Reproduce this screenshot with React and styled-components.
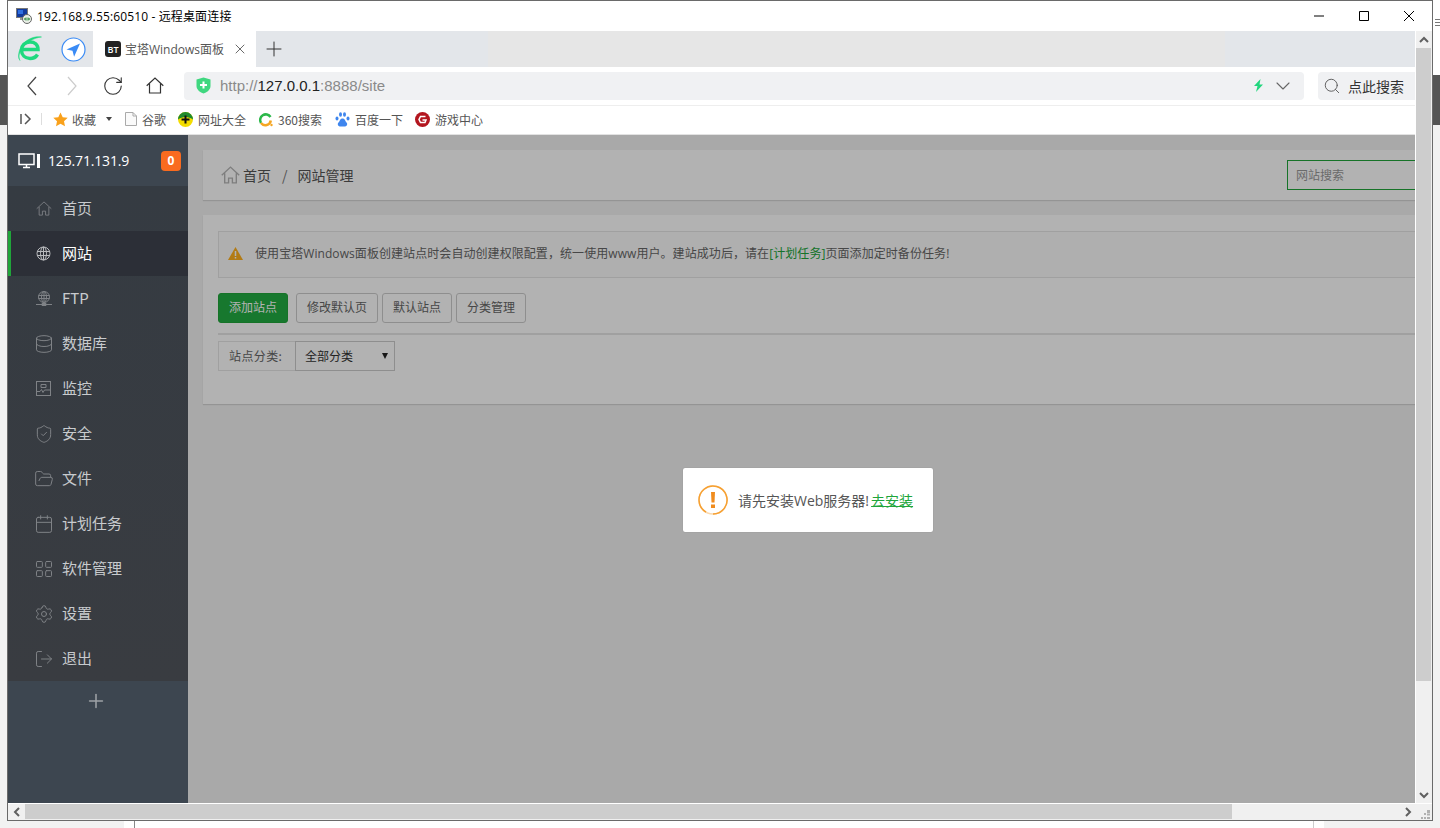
import React from 'react'
import styled, { createGlobalStyle } from 'styled-components'
import {
  Database,
  ShieldCheck,
  FolderOpen,
  Calendar,
  LayoutGrid,
  Settings,
  LogOut,
  Plus,
  RotateCw,
  ChevronDown,
  Search,
  X,
} from 'lucide-react'

const sans = `"Open Sans", "Noto Sans CJK SC", sans-serif`
const cjk = `"Noto Sans CJK SC", "Open Sans", sans-serif`

const GlobalStyle = createGlobalStyle`
  html, body {
    margin: 0;
    padding: 0;
    width: 1440px;
    height: 828px;
    overflow: hidden;
    background: #f2f2f2;
    font-family: ${cjk};
  }
  * { box-sizing: border-box; }
`

const Desktop = styled.div`
  display: grid;
  grid-template-columns: 7px 1426px 7px;
  grid-template-rows: 821px 7px;
  width: 1440px;
  height: 828px;
`

const SideStrip = styled.div`
  background: linear-gradient(#fff 0 75px, #555 75px 125px, #f2f2f2 125px);
`

const MenuDots = styled.svg`
  display: block;
  margin: 19px 0 0 2px;
`

const BottomStrip = styled.div`
  grid-column: 1 / 4;
  background: linear-gradient(
    90deg,
    #f2f2f2 0 124px,
    #fff 124px 134px,
    #888 134px 135px,
    #fff 135px 1313px,
    #ccc 1313px 1314px,
    #fff 1314px 1324px,
    #f2f2f2 1324px
  );
`

const Window = styled.div`
  display: flex;
  flex-direction: column;
  border: 1px solid #6a6a6a;
  background: #fff;
  min-width: 0;
`

const TitleBar = styled.div`
  display: flex;
  align-items: center;
  height: 30px;
  padding-left: 8px;
  flex: none;
`

const TitleText = styled.span`
  margin-left: 5px;
  font-family: ${sans};
  font-size: 12px;
  letter-spacing: 0.14px;
  color: #000;
  white-space: nowrap;
`

const WindowControls = styled.div`
  display: flex;
  align-items: center;
  gap: 33px;
  margin-left: auto;
  padding-right: 17px;
`

const Middle = styled.div`
  display: flex;
  flex: 1;
  min-height: 0;
`

const Browser = styled.div`
  display: flex;
  flex-direction: column;
  width: 1408px;
  flex: none;
  border-right: 1px solid #fff;
  min-height: 0;
`

const TabStrip = styled.div`
  display: flex;
  align-items: stretch;
  height: 36px;
  flex: none;
  background: linear-gradient(90deg, #e3e6ea 0 480px, #e6e6e6 480px 1217px, #e3e6ea 1217px);
`

const TabLogos = styled.div`
  display: flex;
  align-items: center;
  gap: 18px;
  width: 85px;
  padding-left: 9px;
`

const Tab = styled.div`
  display: flex;
  align-items: center;
  width: 163px;
  padding-left: 12px;
  background: #fff;
`

const Favicon = styled.span`
  display: flex;
  align-items: center;
  justify-content: center;
  width: 16px;
  height: 16px;
  border-radius: 3px;
  background: #222;
  color: #fff;
  font-family: ${sans};
  font-size: 9px;
  font-weight: 600;
`

const TabTitle = styled.span`
  margin-left: 4px;
  width: 107px;
  font-family: ${sans};
  font-size: 12px;
  color: #555;
  white-space: nowrap;
`

const NewTab = styled.div`
  display: flex;
  align-items: center;
  margin-left: 6px;
  color: #333;
`

const NavBar = styled.div`
  display: flex;
  align-items: center;
  height: 38px;
  flex: none;
  padding: 0 0 1px 15px;
`

const NavButton = styled.span`
  display: flex;
  justify-content: center;
  width: 18px;
  margin-right: ${(p) => p.$gap}px;
  color: ${(p) => p.$color || '#444'};
  svg {
    flex: none;
  }
`

const AddressBar = styled.div`
  display: flex;
  align-items: center;
  width: 1120px;
  height: 28px;
  padding: 0 9px 0 12px;
  border-radius: 4px;
  background: #f0f1f3;
`

const UrlText = styled.span`
  margin-left: 9px;
  font-family: "Liberation Sans", sans-serif;
  font-size: 15px;
  color: #8a8a8a;
`

const UrlHost = styled.span`
  color: #222;
`

const AddressTail = styled.div`
  display: flex;
  align-items: center;
  gap: 7px;
  margin-left: auto;
  color: #666;
`

const SearchBox = styled.div`
  display: flex;
  align-items: center;
  gap: 7px;
  flex: 1;
  height: 28px;
  margin-left: 14px;
  padding-left: 5px;
  border-radius: 4px 0 0 4px;
  background: #f0f1f3;
  color: #555;
  font-size: 14px;
`

const SearchLabel = styled.span`
  color: #333;
`

const Bookmarks = styled.div`
  display: flex;
  align-items: center;
  height: 30px;
  flex: none;
  padding: 0 0 2px 12px;
  border-top: 1px solid #eee;
  border-bottom: 1px solid #e2e2e2;
  font-size: 12px;
  color: #555;
`

const Separator = styled.span`
  width: 1px;
  height: 12px;
  margin: 0 11px 0 9px;
  background: #ddd;
`

const BookmarkItem = styled.span`
  display: flex;
  align-items: center;
  gap: ${(p) => p.$inner ?? 5}px;
  margin-right: ${(p) => p.$gap ?? 12}px;
  white-space: nowrap;
`

const Caret = styled.span`
  width: 0;
  height: 0;
  margin-right: ${(p) => p.$gap ?? 0}px;
  border-left: 3px solid transparent;
  border-right: 3px solid transparent;
  border-top: ${(p) => p.$tall ?? 4}px solid ${(p) => p.$color || '#444'};
`

const Panel = styled.div`
  display: flex;
  flex: 1;
  min-height: 0;
  overflow: hidden;
`

const Sidebar = styled.aside`
  display: flex;
  flex-direction: column;
  width: 180px;
  flex: none;
  background: #3d4650;
`

const SidebarHead = styled.div`
  display: flex;
  align-items: center;
  height: 51px;
  padding: 0 7px 0 10px;
  color: #fff;
`

const HostIp = styled.span`
  margin-left: 8px;
  font-family: ${sans};
  font-size: 14px;
  letter-spacing: -0.16px;
`

const Badge = styled.span`
  display: flex;
  align-items: center;
  justify-content: center;
  width: 20px;
  height: 20px;
  margin-left: auto;
  border-radius: 4px;
  background: #f96b1f;
  font-family: ${sans};
  font-size: 12px;
  font-weight: 700;
`

const Menu = styled.nav`
  display: flex;
  flex-direction: column;
  background: linear-gradient(#353b42, #393c41);
`

const MenuItem = styled.div`
  display: flex;
  align-items: center;
  gap: 11px;
  height: 45px;
  padding-left: ${(p) => (p.$active ? 25 : 28)}px;
  border-left: ${(p) => (p.$active ? '3px solid #20a53a' : '0')};
  background: ${(p) => (p.$active ? '#2c2f37' : 'transparent')};
  color: ${(p) => (p.$active ? '#fff' : '#c8cbce')};
  font-size: 15px;
`

const MenuIcon = styled.span`
  display: flex;
  justify-content: center;
  width: 15px;
  flex: none;
  color: ${(p) => (p.$active ? '#b8babd' : '#7f8286')};
  svg {
    flex: none;
  }
`

const MenuLabel = styled.span`
  margin-bottom: 3px;
`

const SidebarFoot = styled.div`
  display: flex;
  justify-content: center;
  padding: 9px 4px 0 0;
  color: #9da1a5;
`

const Main = styled.main`
  position: relative;
  flex: 1;
  min-width: 0;
  overflow: hidden;
  padding: 15px 0 0 15px;
  background: #f2f2f2;
`

const Card = styled.section`
  width: 1300px;
  background: #fff;
  box-shadow: 0 1px 1px rgba(0, 0, 0, 0.12);
`

const CrumbCard = styled(Card)`
  display: flex;
  align-items: center;
  height: 50px;
  padding: 0 66px 0 18px;
  color: #555;
  font-size: 14px;
`

const CrumbHome = styled.span`
  display: flex;
  margin-right: 3px;
`

const CrumbSlash = styled.span`
  margin: 0 10px 0 11px;
  color: #777;
`

const SearchInput = styled.input`
  width: 150px;
  height: 30px;
  margin-left: auto;
  padding: 0 8px 1px;
  border: 1px solid #20a53a;
  outline: 0;
  background: #fff;
  font-family: ${cjk};
  font-size: 12px;
  &::placeholder {
    color: #999;
  }
`

const SiteCard = styled(Card)`
  height: 189px;
  margin-top: 15px;
  padding: 16px 15px 0;
`

const Notice = styled.div`
  display: flex;
  align-items: center;
  gap: 12px;
  height: 47px;
  padding: 0 0 3px 9px;
  border: 1px solid #e6e6e6;
  background: #fbfbfb;
  color: #666;
  font-family: ${sans};
  font-size: 12px;
  letter-spacing: 0.07px;
`

const NoticeLink = styled.a`
  color: #20a53a;
`

const Toolbar = styled.div`
  display: flex;
  gap: 4px;
  padding: 15px 0 10px;
  border-bottom: 2px solid #e6e6e6;
`

const ToolButton = styled.button`
  height: 30px;
  margin-right: ${(p) => (p.$primary ? 4 : 0)}px;
  padding: 0 10px 3px;
  border: 1px solid ${(p) => (p.$primary ? '#20a53a' : '#ccc')};
  border-radius: 3px;
  background: ${(p) => (p.$primary ? '#22ac42' : '#fff')};
  color: ${(p) => (p.$primary ? '#fff' : '#666')};
  font-family: ${cjk};
  font-size: 12px;
`

const FilterRow = styled.div`
  display: flex;
  height: 30px;
  margin-top: 6px;
  font-size: 12px;
`

const FilterLabel = styled.span`
  display: flex;
  align-items: center;
  width: 77px;
  padding: 0 0 1px 10px;
  border: 1px solid #e6e6e6;
  border-right: 0;
  color: #666;
  letter-spacing: 0.4px;
`

const SelectBox = styled.div`
  display: flex;
  align-items: center;
  justify-content: space-between;
  width: 100px;
  padding: 0 6px 1px 9px;
  border: 1px solid #ccc;
  color: #333;
`

const Shade = styled.div`
  position: absolute;
  inset: 0;
  background: rgba(0, 0, 0, 0.3);
`

const Toast = styled.div`
  position: absolute;
  left: 495px;
  top: 333px;
  display: flex;
  align-items: center;
  gap: 10px;
  width: 250px;
  height: 64px;
  padding-left: 15px;
  border-radius: 2px;
  background: #fff;
  box-shadow: 0 0 1px rgba(0, 0, 0, 0.3);
  color: #555;
  font-family: ${sans};
  font-size: 14px;
`

const ToastText = styled.span`
  margin-bottom: 0;
  white-space: nowrap;
`

const ToastLink = styled.a`
  margin-left: 2px;
  color: #20a53a;
  text-decoration: underline;
  text-underline-offset: 0;
`

const VScroll = styled.div`
  display: flex;
  flex-direction: column;
  width: 16px;
  flex: none;
  padding-right: 1px;
  background: #f0f0f0;
`

const ArrowCell = styled.span`
  display: flex;
  align-items: center;
  justify-content: center;
  height: ${(p) => p.$h || 17}px;
  width: ${(p) => p.$w || 15}px;
  flex: none;
`

const VThumb = styled.div`
  height: 633px;
  flex: none;
  background: #cdcdcd;
`

const VTrack = styled.div`
  flex: 1;
`

const HScroll = styled.div`
  display: flex;
  align-items: flex-start;
  height: 17px;
  flex: none;
  background: #f0f0f0;
  border-top: 1px solid #fff;
`

const HThumb = styled.div`
  width: 1207px;
  height: 15px;
  flex: none;
  background: #cdcdcd;
`

const HTrack = styled.div`
  flex: 1;
`

const Corner = styled.span`
  display: flex;
  align-items: flex-end;
  justify-content: flex-end;
  width: 16px;
  height: 16px;
  flex: none;
  padding: 0 2px 1px 0;
`

const Line = ({ d, size = 12, stroke = '#000' }) => (
  <svg width={size} height={size} viewBox="0 0 12 12" fill="none" stroke={stroke}>
    <path d={d} />
  </svg>
)

const ScrollArrow = ({ d }) => (
  <svg width="10" height="10" viewBox="0 0 10 10" fill="none" stroke="#606060" strokeWidth="2">
    <path d={d} />
  </svg>
)

const NavChevron = ({ d }) => (
  <svg width="10" height="20" viewBox="0 0 10 20" fill="none" stroke="currentColor" strokeWidth="1.2">
    <path d={d} />
  </svg>
)

const HouseOutline = ({ w, h, stroke, strokeWidth }) => (
  <svg width={w} height={h} viewBox="0 0 18 17" fill="none" stroke={stroke} strokeWidth={strokeWidth}>
    <path d="M.7 8.800 9 1l8.300 7.800M3.500 6.800V16h3.700v-4.500h3.600V16h3.700V6.800" />
  </svg>
)

const NavHouse = () => (
  <svg width="18" height="17" viewBox="0 0 18 17" fill="none" stroke="#333" strokeWidth="1.2">
    <path d="M.7 8.800 9 1l8.300 7.800M3.500 6.800V16h11V6.800" />
  </svg>
)

const RdpIcon = () => (
  <svg width="16" height="16" viewBox="0 0 16 16">
    <rect x="0.5" y="0.5" width="11" height="9" fill="#123a9c" stroke="#777" />
    <rect x="2" y="2" width="5" height="4" fill="#2f6fe0" />
    <rect x="4" y="10" width="5" height="2" fill="#999" />
    <circle cx="11" cy="11" r="4.500" fill="#e9efe6" stroke="#666" />
    <path d="M8.500 11h5M10 9.500 8.500 11 10 12.500M12 9.500l1.500 1.500-1.500 1.500" fill="none" stroke="#2a8a3a" />
  </svg>
)

const ELogo = () => (
  <svg width="26" height="26" viewBox="0 0 26 26" fill="none" stroke="#1fd97f">
    <path
      d="M5 13.500H21C21 8.500 17.500 6 13 6 8 6 4.500 9.500 4.500 14 4.500 19 8 22.500 13 22.500 16.500 22.500 19 21 20.500 18.500"
      strokeWidth="3.500"
    />
    <path d="M3 24.500C-1 18 8 3 24.500 1 21 0 12 1 6 8 2 13 0 21 3 24.500Z" fill="#1fd97f" strokeWidth="0.500" />
  </svg>
)

const NavLogo = () => (
  <svg width="25" height="25" viewBox="0 0 25 25">
    <circle cx="12.500" cy="12.500" r="11.500" fill="#fff" stroke="#3a8bf5" strokeWidth="1.200" />
    <path d="M19 6.500 5.500 12.500l6 1.200 1.600 6Z" fill="#3a8bf5" />
  </svg>
)

const ShieldIcon = () => (
  <svg width="15" height="17" viewBox="0 0 15 17">
    <path d="M7.500.5 14.500 2.500V9C14.500 13 10.500 15.500 7.500 16.500 4.500 15.500.5 13 .5 9V2.500Z" fill="#3fd77f" />
    <path d="M7.500 4.500v7M4 8h7" stroke="#fff" strokeWidth="2" />
  </svg>
)

const BoltIcon = () => (
  <svg width="11" height="13" viewBox="0 0 11 13">
    <path d="M7.500 0 1 7h3.500L3 13l7-7.500H6.500Z" fill="#22d67e" />
  </svg>
)

const PanelToggle = () => (
  <svg width="12" height="12" viewBox="0 0 12 12" fill="none" stroke="#555" strokeWidth="1.500">
    <path d="M1 1v10M5 1l5 5-5 5" />
  </svg>
)

const StarIcon = () => (
  <svg width="15" height="15" viewBox="0 0 15 15">
    <path d="M7.500.5 9.700 5.200l5 .6-3.700 3.400 1 5-4.500-2.500L3 14.200l1-5L.3 5.800l5-.6Z" fill="#f9a11b" />
  </svg>
)

const PageIcon = () => (
  <svg width="12" height="14" viewBox="0 0 12 14" fill="#fafafa" stroke="#aaa">
    <path d="M.5.500h7.500l3.500 3.500v9.500H.5ZM8 .5V4h3.500" />
  </svg>
)

const HaoIcon = () => (
  <svg width="15" height="15" viewBox="0 0 15 15">
    <circle cx="7.500" cy="7.500" r="7.500" fill="#f3dc00" />
    <path d="M0 7.500A7.500 7.500 0 0 1 15 7.500C11 4 4 4 0 7.500Z" fill="#1e8a2d" />
    <path d="M7.500 3.500v8M3.500 7.500h8" stroke="#111" strokeWidth="2" />
  </svg>
)

const So360Icon = () => (
  <svg width="15" height="15" viewBox="0 0 15 15" fill="none" strokeWidth="2.500">
    <path d="M3 11A5.500 5.500 0 0 1 12.500 5" stroke="#2cb84a" />
    <path d="M3 11A5.500 5.500 0 0 0 12.800 8.500" stroke="#f5a623" />
    <circle cx="13.500" cy="13" r="1.200" fill="#f5a623" stroke="none" />
  </svg>
)

const PawIcon = () => (
  <svg width="15" height="15" viewBox="0 0 15 15" fill="#3f86ee">
    <ellipse cx="2" cy="6.500" rx="1.500" ry="2" />
    <ellipse cx="5.500" cy="2.500" rx="1.500" ry="2.200" />
    <ellipse cx="9.500" cy="2.500" rx="1.500" ry="2.200" />
    <ellipse cx="13" cy="6.500" rx="1.500" ry="2" />
    <path d="M7.500 6.500C5 6.500 5 9 3.500 10.500 2 12 3 14.500 5.500 14.500 6.500 14.500 8.500 14.500 9.500 14.500 12 14.500 13 12 11.500 10.500 10 9 10 6.500 7.500 6.500Z" />
  </svg>
)

const GameIcon = () => (
  <svg width="15" height="15" viewBox="0 0 15 15" fill="none">
    <circle cx="7.500" cy="7.500" r="7.500" fill="#b3161f" />
    <path d="M10.500 4.500H5.500L4 7.500 5.500 10.500H10L11 8H7.500" stroke="#fff" strokeWidth="1.500" />
  </svg>
)

const HostIcon = () => (
  <svg width="22" height="16" viewBox="0 0 22 16" fill="none" stroke="#fff" strokeWidth="1.500">
    <rect x="1" y="1" width="15" height="10.500" />
    <path d="M5 14.500h7M8.500 11.500v3" />
    <rect x="19" y="1" width="3" height="14" fill="#fff" stroke="none" />
  </svg>
)

const GlobeIcon = () => (
  <svg width="15" height="15" viewBox="0 0 15 15" fill="none" stroke="currentColor">
    <circle cx="7.500" cy="7.500" r="6.500" />
    <ellipse cx="7.500" cy="7.500" rx="3" ry="6.500" />
    <path d="M1 5.500h13M1 9.500h13M7.500 1v13" />
  </svg>
)

const FtpIcon = () => (
  <svg width="16" height="15" viewBox="0 0 16 15" fill="none" stroke="currentColor">
    <circle cx="8" cy="6" r="5.500" />
    <ellipse cx="8" cy="6" rx="2.500" ry="5.500" />
    <path d="M2.500 4.500h11M2.500 7.500h11M8 .5v11M0 13.500h16M6 12.500h4v2H6Z" />
  </svg>
)

const MonitorIcon = () => (
  <svg width="15" height="15" viewBox="0 0 15 15" fill="none" stroke="currentColor">
    <rect x=".5" y=".5" width="14" height="14" />
    <path d="M1 10.500h3l1.500-2 1.500 3 1.500-2.500h5.500M5 3.500h5v3H5Z" />
  </svg>
)

const ToastIcon = () => (
  <svg width="30" height="30" viewBox="0 0 30 30" fill="none">
    <circle cx="15" cy="15" r="14" stroke="#fbd9ad" strokeWidth="1.500" />
    <path d="M8 27.100A14 14 0 1 1 15 29" stroke="#f6a032" strokeWidth="1.500" />
    <path d="M13 7h4l-.5 10.500h-3Z" fill="#f08c1e" />
    <rect x="13" y="19.500" width="4" height="3.500" fill="#f08c1e" />
  </svg>
)

const WarnIcon = () => (
  <svg width="15" height="13" viewBox="0 0 15 13">
    <path d="M7.500 0 15 13H0Z" fill="#ffb01f" />
    <path d="M7.500 4v5M7.500 10v1.500" stroke="#fff" strokeWidth="1.500" />
  </svg>
)

const menu = [
  { label: '首页', icon: <HouseOutline w={16} h={15} stroke="currentColor" strokeWidth={1} /> },
  { label: '网站', icon: <GlobeIcon />, active: true },
  { label: 'FTP', icon: <FtpIcon /> },
  { label: '数据库', icon: <Database size={20} strokeWidth={1.2} /> },
  { label: '监控', icon: <MonitorIcon /> },
  { label: '安全', icon: <ShieldCheck size={20} strokeWidth={1.2} /> },
  { label: '文件', icon: <FolderOpen size={20} strokeWidth={1.2} /> },
  { label: '计划任务', icon: <Calendar size={20} strokeWidth={1.2} /> },
  { label: '软件管理', icon: <LayoutGrid size={20} strokeWidth={1.2} /> },
  { label: '设置', icon: <Settings size={20} strokeWidth={1.2} /> },
  { label: '退出', icon: <LogOut size={20} strokeWidth={1.2} /> },
]

const noticeHead = '使用宝塔Windows面板创建站点时会自动创建权限配置\uFF0C统一使用www用户。建站成功后\uFF0C请在'

export default function App() {
  return (
    <>
      <GlobalStyle />
      <Desktop>
        <SideStrip />
        <Window>
          <TitleBar>
            <RdpIcon />
            <TitleText>192.168.9.55:60510 - 远程桌面连接</TitleText>
            <WindowControls>
              <Line d="M1 6h10" />
              <Line d="M1.500 1.500h9v9h-9Z" />
              <Line d="M1 1l10 10M11 1 1 11" />
            </WindowControls>
          </TitleBar>
          <Middle>
            <Browser>
              <TabStrip>
                <TabLogos>
                  <ELogo />
                  <NavLogo />
                </TabLogos>
                <Tab>
                  <Favicon>BT</Favicon>
                  <TabTitle>宝塔Windows面板</TabTitle>
                  <X size={16} strokeWidth={1.2} color="#444" />
                </Tab>
                <NewTab>
                  <Plus size={24} strokeWidth={1} />
                </NewTab>
              </TabStrip>
              <NavBar>
                <NavButton $gap={22}>
                  <NavChevron d="M9 1 1 10l8 9" />
                </NavButton>
                <NavButton $gap={23} $color="#ccc">
                  <NavChevron d="M1 1l8 9-8 9" />
                </NavButton>
                <NavButton $gap={24} $color="#333">
                  <RotateCw size={22} strokeWidth={1.2} />
                </NavButton>
                <NavButton $gap={20}>
                  <NavHouse />
                </NavButton>
                <AddressBar>
                  <ShieldIcon />
                  <UrlText>
                    http://<UrlHost>127.0.0.1</UrlHost>:8888/site
                  </UrlText>
                  <AddressTail>
                    <BoltIcon />
                    <ChevronDown size={24} strokeWidth={1.1} />
                  </AddressTail>
                </AddressBar>
                <SearchBox>
                  <Search size={18} strokeWidth={1.2} />
                  <SearchLabel>点此搜索</SearchLabel>
                </SearchBox>
              </NavBar>
              <Bookmarks>
                <PanelToggle />
                <Separator />
                <BookmarkItem $inner={4} $gap={10}>
                  <StarIcon />
                  收藏
                </BookmarkItem>
                <Caret $gap={13} />
                <BookmarkItem>
                  <PageIcon />
                  谷歌
                </BookmarkItem>
                <BookmarkItem>
                  <HaoIcon />
                  网址大全
                </BookmarkItem>
                <BookmarkItem $gap={13}>
                  <So360Icon />
                  360搜索
                </BookmarkItem>
                <BookmarkItem>
                  <PawIcon />
                  百度一下
                </BookmarkItem>
                <BookmarkItem>
                  <GameIcon />
                  游戏中心
                </BookmarkItem>
              </Bookmarks>
              <Panel>
                <Sidebar>
                  <SidebarHead>
                    <HostIcon />
                    <HostIp>125.71.131.9</HostIp>
                    <Badge>0</Badge>
                  </SidebarHead>
                  <Menu>
                    {menu.map((item) => (
                      <MenuItem key={item.label} $active={item.active}>
                        <MenuIcon $active={item.active}>{item.icon}</MenuIcon>
                        <MenuLabel>{item.label}</MenuLabel>
                      </MenuItem>
                    ))}
                  </Menu>
                  <SidebarFoot>
                    <Plus size={22} strokeWidth={1.7} />
                  </SidebarFoot>
                </Sidebar>
                <Main>
                  <CrumbCard>
                    <CrumbHome>
                      <HouseOutline w={19} h={18} stroke="#b5b5b5" strokeWidth={1.3} />
                    </CrumbHome>
                    首页
                    <CrumbSlash>/</CrumbSlash>
                    网站管理
                    <SearchInput placeholder="网站搜索" />
                  </CrumbCard>
                  <SiteCard>
                    <Notice>
                      <WarnIcon />
                      <span>
                        {noticeHead}
                        <NoticeLink>[计划任务]</NoticeLink>页面添加定时备份任务!
                      </span>
                    </Notice>
                    <Toolbar>
                      <ToolButton $primary>添加站点</ToolButton>
                      <ToolButton>修改默认页</ToolButton>
                      <ToolButton>默认站点</ToolButton>
                      <ToolButton>分类管理</ToolButton>
                    </Toolbar>
                    <FilterRow>
                      <FilterLabel>站点分类:</FilterLabel>
                      <SelectBox>
                        全部分类
                        <Caret $color="#222" $tall={6} />
                      </SelectBox>
                    </FilterRow>
                  </SiteCard>
                  <Shade />
                  <Toast>
                    <ToastIcon />
                    <ToastText>
                      请先安装Web服务器!<ToastLink>去安装</ToastLink>
                    </ToastText>
                  </Toast>
                </Main>
              </Panel>
            </Browser>
            <VScroll>
              <ArrowCell>
                <ScrollArrow d="M1 7l4-4 4 4" />
              </ArrowCell>
              <VThumb />
              <VTrack />
              <ArrowCell>
                <ScrollArrow d="M1 3l4 4 4-4" />
              </ArrowCell>
            </VScroll>
          </Middle>
          <HScroll>
            <ArrowCell $w={17} $h={15}>
              <ScrollArrow d="M7 1 3 5l4 4" />
            </ArrowCell>
            <HThumb />
            <HTrack />
            <ArrowCell $w={17} $h={15}>
              <ScrollArrow d="M3 1l4 4-4 4" />
            </ArrowCell>
            <Corner>
              <svg width="9" height="9" viewBox="0 0 9 9" fill="#b0b0b0">
                <path d="M6 0h3v3H6ZM3 3h2v2H3ZM6 3.500h3v2H6ZM0 7h2v2H0ZM3 7h2v2H3ZM6 7h3v2H6Z" />
              </svg>
            </Corner>
          </HScroll>
        </Window>
        <SideStrip>
          <MenuDots width="5" height="8" viewBox="0 0 5 8" fill="#777">
            <path d="M0 0h5v1H0ZM0 3h5v1H0ZM0 6h5v1H0Z" />
          </MenuDots>
        </SideStrip>
        <BottomStrip />
      </Desktop>
    </>
  )
}
